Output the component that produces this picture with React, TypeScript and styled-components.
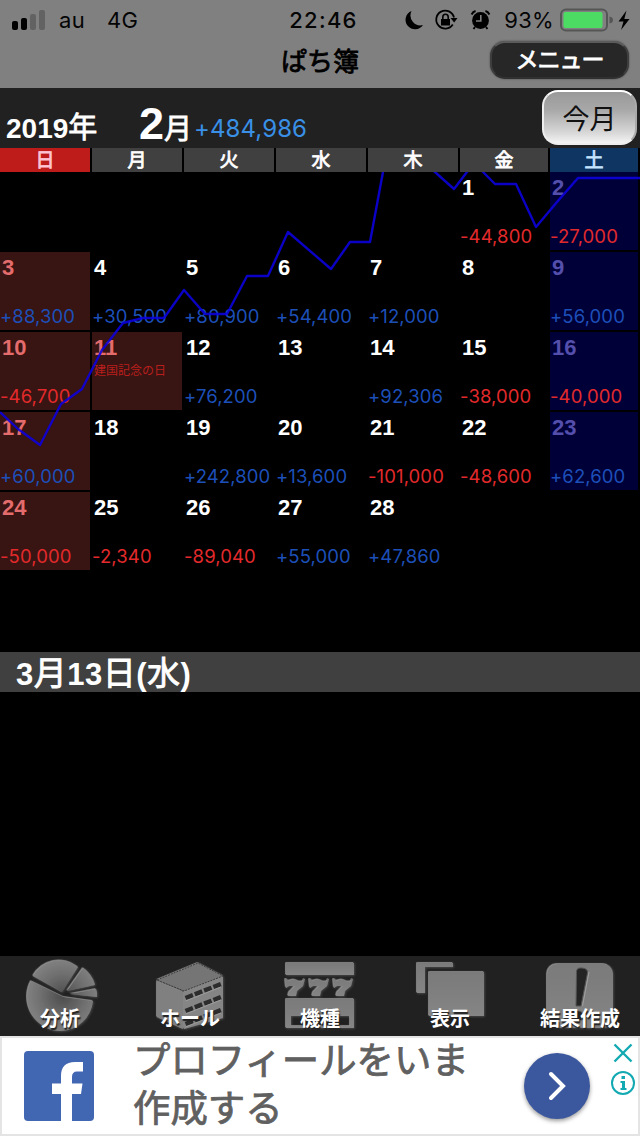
import React from "react";
import styled, { createGlobalStyle, css } from "styled-components";

const GlobalStyle = createGlobalStyle`
    * {
        box-sizing: border-box;
    }

    body {
        margin: 0;
        background: #000;
        font-family: "Liberation Sans", "Noto Sans CJK JP", sans-serif;
    }
`;

// between the regular and bold cuts of Noto Sans CJK
const semiBold = css`
    -webkit-text-stroke: 0.8px currentColor;
`;

const Screen = styled.div`
    width: 640px;
    height: 1136px;
    display: flex;
    flex-direction: column;
    overflow: hidden;
    background: #000;
`;

const TopBar = styled.header`
    height: 88px;
    flex-shrink: 0;
    background: #808080;
`;

const StatusBar = styled.div`
    height: 40px;
    padding: 0 9px 0 12px;
    display: grid;
    grid-template-columns: 1fr auto 1fr;
    align-items: center;
    color: #050505;
    font: 22px/40px "Inter", sans-serif;
`;

const StatusGroup = styled.div<{ end?: boolean }>`
    display: flex;
    align-items: center;
    justify-content: ${(props) => (props.end ? "flex-end" : "flex-start")};
    white-space: nowrap;
`;

const Carrier = styled.span`
    margin-left: 13px;
    letter-spacing: 0.3px;
`;

const Network = styled.span`
    margin-left: 22px;
    letter-spacing: 0.2px;
`;

const Clock = styled.span`
    font-weight: 500;
    letter-spacing: 1.3px;
    padding-left: 4px;
`;

const Percent = styled.span`
    margin: 0 6px 0 13px;
    letter-spacing: 0.3px;
`;

const NavBar = styled.div`
    height: 48px;
    padding-right: 11px;
    display: grid;
    grid-template-columns: 1fr auto 1fr;
    align-items: start;
`;

const Title = styled.h1`
    margin: 0;
    grid-column: 2;
    padding-left: 11px;
    font: 400 26px/40px "Noto Sans CJK JP", sans-serif;
    color: #000;
    ${semiBold}
`;

const MenuButton = styled.button`
    justify-self: end;
    width: 139px;
    height: 38px;
    margin-top: 1px;
    padding: 0 0 3px;
    border: 2px solid #3d3d3d;
    border-top-color: #5b5b5b;
    border-bottom-color: #303030;
    border-radius: 15px;
    background: #272727;
    box-shadow: 0 0 2px #444;
    color: #fff;
    font: 400 23px/31px "Noto Sans CJK JP", sans-serif;
    letter-spacing: -1px;
    ${semiBold}
`;

const MonthBar = styled.div`
    height: 60px;
    flex-shrink: 0;
    padding: 0 3px 0 6px;
    display: flex;
    align-items: flex-start;
    background: #212121;
    color: #fff;
    font-weight: 700;
    white-space: nowrap;
`;

const Year = styled.div`
    width: 133px;
    padding-top: 20px;
    font-size: 28px;
    line-height: 40px;
`;

const Month = styled.div`
    width: 55px;
    padding-top: 12px;
    font-size: 45px;
    line-height: 48px;
`;

const Kanji = styled.span<{ size: number }>`
    font-size: ${(props) => props.size}px;
    font-weight: 400;
    ${semiBold}
`;

const Total = styled.div`
    flex: 1;
    padding-top: 21px;
    color: #3990e6;
    font: 400 24px/40px "Inter", sans-serif;
    letter-spacing: 0.1px;
`;

const TodayButton = styled.button`
    width: 95px;
    height: 55px;
    margin-top: 2px;
    padding: 0;
    border: 2px solid #eee;
    border-top-color: #fff;
    border-right-color: #aaa;
    border-radius: 16px;
    background: linear-gradient(#999, #a8a8a8 35%, #d8d8d8 80%, #f4f4f4);
    color: #111;
    font: 400 27px/50px "Noto Sans CJK JP", sans-serif;
`;

const WeekGrid = styled.div`
    display: grid;
    grid-template-columns: repeat(5, 90px) 88px 88px;
    column-gap: 2px;
`;

type Tone = "sun" | "sat" | "day";

const WEEKDAY_BG: { [K in Tone]: string } = {
    sun: "#be1b1b",
    sat: "#0f3563",
    day: "#404040",
};
const CELL_BG: { [K in Tone]: string } = {
    sun: "#381412",
    sat: "#000039",
    day: "transparent",
};
const DAY_COLOR: { [K in Tone]: string } = {
    sun: "#e46c6c",
    sat: "#544fac",
    day: "#fff",
};

const Weekday = styled.div<{ tone: Tone }>`
    height: 24px;
    background: ${(props) => WEEKDAY_BG[props.tone]};
    color: ${(props) =>
        props.tone === "sun"
            ? "#ffc4d4"
            : props.tone === "sat"
              ? "#c4e4ff"
              : "#fff"};
    font: 400 19px/22px "Noto Sans CJK JP", sans-serif;
    text-align: center;
    ${semiBold}
`;

const Calendar = styled.section`
    position: relative;
    height: 480px;
    flex-shrink: 0;
`;

const Days = styled(WeekGrid)`
    grid-auto-rows: 78px;
    row-gap: 2px;
`;

const Cell = styled.div<{ tone: Tone }>`
    display: flex;
    flex-direction: column;
    background: ${(props) => CELL_BG[props.tone]};
    white-space: nowrap;
`;

const DayNumber = styled.div<{ tone: Tone }>`
    height: 30px;
    padding-left: 2px;
    color: ${(props) => DAY_COLOR[props.tone]};
    font-size: 22px;
    font-weight: 700;
    line-height: 31px;
`;

const Holiday = styled.div`
    height: 24px;
    padding-left: 2px;
    color: #b91f1d;
    font: 12px/16px "Noto Sans CJK JP", sans-serif;
`;

const Amount = styled.div<{ loss: boolean }>`
    color: ${(props) => (props.loss ? "#e22a2c" : "#1d4fb8")};
    font: 400 18.5px/21px "Inter", sans-serif;
    letter-spacing: 0.1px;
`;

// running balance, laid over the calendar
const Graph = styled.svg`
    position: absolute;
    inset: 0;
    pointer-events: none;
`;

const DateBar = styled.h2`
    height: 40px;
    flex-shrink: 0;
    margin: 0;
    padding-left: 16px;
    background: #404040;
    color: #fff;
    font-size: 31px;
    font-weight: 700;
    line-height: 44px;
    letter-spacing: 0.5px;
`;

const RecordList = styled.main`
    flex: 1;
`;

const TabBar = styled.nav`
    height: 80px;
    flex-shrink: 0;
    margin: 0 -5px;
    display: grid;
    grid-template-columns: repeat(5, 130px);
    background: #212121;
`;

const Tab = styled.div`
    display: grid;
    justify-items: center;

    > * {
        grid-area: 1 / 1;
    }
`;

const TabLabel = styled.span`
    align-self: end;
    color: #fff;
    font: 700 20px/36px "Noto Sans CJK JP", sans-serif;
    text-shadow: 1px 2px 1px #222;
    white-space: nowrap;
    z-index: 1;
`;

const Ad = styled.aside`
    height: 100px;
    flex-shrink: 0;
    padding: 0 2px 0 22px;
    display: flex;
    border: 2px solid #e4e4e4;
    background: #fff;
`;

const AdText = styled.p`
    flex: 1;
    margin: -4px 0 0 39px;
    color: #606060;
    font: 400 37.4px/48px "Noto Sans CJK JP", sans-serif;
    white-space: nowrap;
    ${semiBold}
`;

const AdArrow = styled.div`
    width: 66px;
    height: 66px;
    margin: 15px 20px 0 0;
    display: grid;
    place-items: center;
    border-radius: 50%;
    background: #3b579d;
    box-shadow: 0 2px 4px rgba(0, 0, 0, 0.4);
`;

const AdControls = styled.div`
    width: 26px;
    padding-top: 5px;
    display: flex;
    flex-direction: column;
    align-items: center;
    gap: 7px;
`;

const WEEKDAYS = ["日", "月", "火", "水", "木", "金", "土"];

const AMOUNTS: { [day: number]: string } = {
    1: "-44,800",
    2: "-27,000",
    3: "+88,300",
    4: "+30,500",
    5: "+80,900",
    6: "+54,400",
    7: "+12,000",
    9: "+56,000",
    10: "-46,700",
    12: "+76,200",
    14: "+92,306",
    15: "-38,000",
    16: "-40,000",
    17: "+60,000",
    19: "+242,800",
    20: "+13,600",
    21: "-101,000",
    22: "-48,600",
    23: "+62,600",
    24: "-50,000",
    25: "-2,340",
    26: "-89,040",
    27: "+55,000",
    28: "+47,860",
};
const HOLIDAYS: { [day: number]: string } = { 11: "建国記念の日" };

const FIRST_WEEKDAY = 5;

const toneOf = (column: number, day?: number): Tone => {
    if (column === 0 || (day && HOLIDAYS[day])) return "sun";
    return column === 6 ? "sat" : "day";
};

const SignalIcon = () => (
    <svg width="34" height="20" viewBox="0 0 34 20">
        <rect x="0" y="11" width="6" height="9" rx="2" fill="#000" />
        <rect x="9" y="8" width="6" height="12" rx="2" fill="#000" />
        <rect x="18" y="4" width="6" height="16" rx="2" fill="#626262" />
        <rect x="27" y="0" width="6" height="20" rx="2" fill="#626262" />
    </svg>
);

const StatusIcons = () => (
    <svg width="88" height="24" viewBox="0 0 88 24">
        <path d="M8.5 3A9.500 9.500 0 1 0 20 17A10 10 0 0 1 8.5 3Z" />
        <path
            d="M49.8 16.5A9 9 0 1 1 51 9.5"
            fill="none"
            stroke="#000"
            strokeWidth="1.8"
        />
        <path d="M47.5 10h7l-3.3 4.5zM38 11h9v6.6h-9z" />
        <path
            d="M39.8 11V9a2.7 2.7 0 0 1 5.4 0v2"
            fill="none"
            stroke="#000"
            strokeWidth="1.6"
        />
        <circle cx="77.5" cy="12.5" r="8.4" />
        <path
            d="M68.6 6.5Q70 3.5 72.6 3M82.4 3Q85 3.5 86.4 6.5M72 19l-1.5 2M83 19l1.5 2"
            fill="none"
            stroke="#000"
            strokeWidth="2"
        />
        <path
            d="M77.8 7v6H73"
            fill="none"
            stroke="#808080"
            strokeWidth="1.6"
        />
    </svg>
);

const BatteryIcon = () => (
    <svg width="71" height="24" viewBox="0 0 71 24">
        <rect
            x="1"
            y="1.5"
            width="46"
            height="21"
            rx="5"
            fill="none"
            stroke="#555"
            strokeWidth="2"
        />
        <rect x="3.5" y="4" width="39" height="16" rx="2" fill="#4cdb63" />
        <path d="M49.5 8.5Q53 9 53 12t-3.5 3.5z" fill="#555" />
        <path d="M66.5 2.5 58.5 13.5h5L61 22l8.5-11h-5.2z" fill="#000" />
    </svg>
);

const Metal = () => (
    <svg width="0" height="0" style={{ position: "absolute" }}>
        <defs>
            <linearGradient id="metal" x1="0" y1="0" x2="0" y2="1">
                <stop offset="0" stopColor="#7a7a7a" />
                <stop offset="1" stopColor="#858585" />
            </linearGradient>
            <radialGradient
                id="pie"
                gradientUnits="userSpaceOnUse"
                cx="43"
                cy="40"
                r="36"
            >
                <stop offset="0" stopColor="#4c4c4c" />
                <stop offset="0.6" stopColor="#6e6e6e" />
                <stop offset="1" stopColor="#808080" />
            </radialGradient>
            <filter id="emboss" x="-10%" y="-10%" width="120%" height="125%">
                <feDropShadow
                    dx="-0.7"
                    dy="-0.7"
                    stdDeviation="0.4"
                    floodColor="#999"
                />
                <feDropShadow
                    dx="0.7"
                    dy="0.7"
                    stdDeviation="0.8"
                    floodColor="#505050"
                />
            </filter>
        </defs>
    </svg>
);

const PieIcon = () => (
    <svg width="80" height="80" viewBox="0 0 80 80">
        <g fill="url(#pie)" filter="url(#emboss)">
            <path d="M42 36 13 20A30 30 0 0 1 58 11Z" />
            <path d="M47 35 63 12Q72 18 75 29Z" />
            <path d="M50 38 76 33Q77.500 37 77 41Z" />
            <path d="M11 25 43.500 41 73 45A33.500 33.500 0 0 1 41 75A34 34 0 0 1 11 25Z" />
        </g>
    </svg>
);

const HallIcon = () => (
    <svg width="80" height="80" viewBox="0 0 80 80">
        <g filter="url(#emboss)">
            <path d="M7 25 33 36V73L7 61Z" fill="#808080" />
            <path d="M7 24 48 7 73 20 34 35Z" fill="#747474" />
            <path d="M34 36 73 20V62L34 73Z" fill="#858585" />
        </g>
        <path
            d="M35.500 42 71 28M35.500 55 71 41M35.500 68 71 54"
            fill="none"
            stroke="#2c2c2c"
            strokeWidth="4.500"
            strokeDasharray="8 2"
        />
        <path
            d="M35.500 45 71 31M35.500 58 71 44M35.500 71 71 57"
            fill="none"
            stroke="#9c9c9c"
            strokeWidth="1"
        />
        <path
            d="M7 24 48 7 73 20 34 35Z"
            fill="none"
            stroke="#3b3b3b"
            strokeWidth="1"
            strokeDasharray="2 1"
        />
    </svg>
);

const SEVEN = "M0 0h2l1 2q6-3 10 0 3 1 5 0l1-2h1l-2 7-6 5-1 5H3l1-4 6-6H4L1 9Z";

const MachineIcon = () => (
    <svg width="80" height="80" viewBox="0 0 80 80">
        <g fill="url(#metal)" filter="url(#emboss)">
            <path d="M6 7h68v12H6z" />
            <path d={SEVEN} transform="translate(5 23)" />
            <path d={SEVEN} transform="translate(29 23)" />
            <path d={SEVEN} transform="translate(53 23)" />
            <path fillRule="evenodd" d="M6 43h68v29H6zM11 60v10h59V60z" />
        </g>
    </svg>
);

const DisplayIcon = () => (
    <svg width="80" height="80" viewBox="0 0 80 80">
        <g fill="url(#metal)" filter="url(#emboss)">
            <path d="M7 7h36v4H15v26H7z" />
            <path d="M19 16h55v44H19z" />
        </g>
    </svg>
);

const ResultIcon = () => (
    <svg width="80" height="80" viewBox="0 0 80 80">
        <rect
            x="7"
            y="8"
            width="66"
            height="64"
            rx="10"
            fill="url(#metal)"
            filter="url(#emboss)"
        />
        <g fill="#242424" stroke="#555" strokeWidth="1">
            <path d="M36.500 15Q37 11.500 42 12 48 12.500 47.500 17L41 50h-5Z" />
            <circle cx="38.500" cy="60" r="5" />
        </g>
        <path d="M49 16 42.500 50" stroke="#a0a0a0" strokeWidth="1" />
    </svg>
);

const TABS = [
    { label: "分析", Icon: PieIcon },
    { label: "ホール", Icon: HallIcon },
    { label: "機種", Icon: MachineIcon },
    { label: "表示", Icon: DisplayIcon },
    { label: "結果作成", Icon: ResultIcon },
];

const FacebookLogo = styled.svg`
    flex-shrink: 0;
    margin-top: 13px;
`;

const Day = (props: { day: number; column: number }) => {
    const tone = toneOf(props.column, props.day);
    const amount = AMOUNTS[props.day];

    return (
        <Cell tone={tone}>
            <DayNumber tone={tone}>{props.day}</DayNumber>
            <Holiday>{HOLIDAYS[props.day]}</Holiday>
            {amount && <Amount loss={amount[0] === "-"}>{amount}</Amount>}
        </Cell>
    );
};

const App = () => {
    const days = Array.from({ length: 28 }, (_, i) => i + 1);

    return (
        <Screen>
            <GlobalStyle />
            <Metal />
            <TopBar>
                <StatusBar>
                    <StatusGroup>
                        <SignalIcon />
                        <Carrier>au</Carrier>
                        <Network>4G</Network>
                    </StatusGroup>
                    <Clock>22:46</Clock>
                    <StatusGroup end>
                        <StatusIcons />
                        <Percent>93%</Percent>
                        <BatteryIcon />
                    </StatusGroup>
                </StatusBar>
                <NavBar>
                    <Title>ぱち簿</Title>
                    <MenuButton>メニュー</MenuButton>
                </NavBar>
            </TopBar>
            <MonthBar>
                <Year>
                    2019<Kanji size={29}>年</Kanji>
                </Year>
                <Month>
                    2<Kanji size={28}>月</Kanji>
                </Month>
                <Total>+484,986</Total>
                <TodayButton>今月</TodayButton>
            </MonthBar>
            <WeekGrid>
                {WEEKDAYS.map((name, i) => (
                    <Weekday key={name} tone={toneOf(i)}>
                        {name}
                    </Weekday>
                ))}
            </WeekGrid>
            <Calendar>
                <Days>
                    {Array.from({ length: FIRST_WEEKDAY }, (_, i) => (
                        <div key={`blank${i}`} />
                    ))}
                    {days.map((day) => (
                        <Day
                            key={day}
                            day={day}
                            column={(day + FIRST_WEEKDAY - 1) % 7}
                        />
                    ))}
                </Days>
                <Graph width="640" height="480" viewBox="0 172 640 480">
                    <path
                        d="M0 412 18 429 40 445 61 404 82 389 102 350 123 323 143 318H164L184 290 205 314H227L247 276H268L288 232 331 269 350 242H370L383 172 390 140 435 172 454 189 467 172 475 160 483 172 495 184H516L536 227 557 202 578 178H640"
                        fill="none"
                        stroke="#0d00e0"
                        strokeOpacity="0.88"
                        strokeWidth="2.4"
                        strokeLinejoin="round"
                    />
                </Graph>
            </Calendar>
            <DateBar>
                3<Kanji size={33}>月</Kanji>13<Kanji size={33}>日</Kanji>(
                <Kanji size={33}>水</Kanji>)
            </DateBar>
            <RecordList />
            <TabBar>
                {TABS.map(({ label, Icon }) => (
                    <Tab key={label}>
                        <Icon />
                        <TabLabel>{label}</TabLabel>
                    </Tab>
                ))}
            </TabBar>
            <Ad>
                <FacebookLogo width="70" height="70" viewBox="0 0 70 70">
                    <rect width="70" height="70" rx="4" fill="#4267b2" />
                    <path
                        d="M37 70V43H28V32.500H37V25Q37 11 51 11H59V20.500H53Q48 20.500 48 26V32.500H58.500L57 43H48V70Z"
                        fill="#fff"
                    />
                </FacebookLogo>
                <AdText>
                    プロフィールをいま
                    <br />
                    作成する
                </AdText>
                <AdArrow>
                    <svg width="20" height="30" viewBox="0 0 20 30">
                        <path
                            d="M4 3 16 15 4 27"
                            fill="none"
                            stroke="#fff"
                            strokeWidth="4"
                            strokeLinecap="round"
                        />
                    </svg>
                </AdArrow>
                <AdControls>
                    <svg width="20" height="20" viewBox="0 0 20 20">
                        <path
                            d="M1.500 1.500 18.500 18.500M18.500 1.500 1.500 18.500"
                            stroke="#12a9b2"
                            strokeWidth="2.400"
                        />
                    </svg>
                    <svg width="26" height="26" viewBox="0 0 26 26">
                        <circle
                            cx="13"
                            cy="13"
                            r="11"
                            fill="none"
                            stroke="#12a9b2"
                            strokeWidth="2"
                        />
                        <path
                            d="M11.500 6h3.500v3h-3.500zM10.500 11H15v7h1.500v2h-6v-2H12v-5h-1.500z"
                            fill="#12a9b2"
                        />
                    </svg>
                </AdControls>
            </Ad>
        </Screen>
    );
};

export default App;
